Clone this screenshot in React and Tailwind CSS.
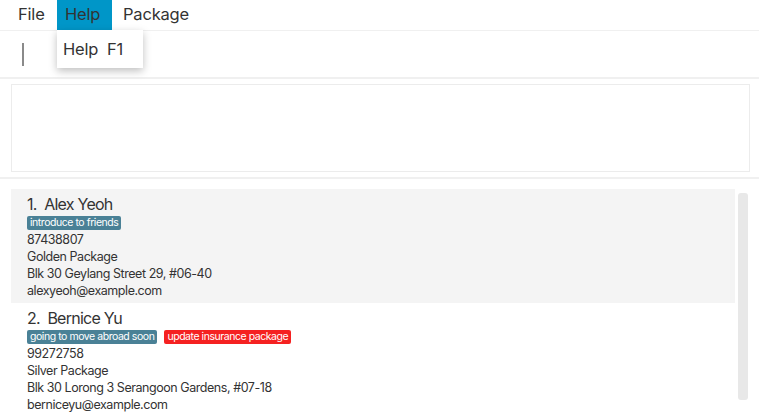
import React from 'react';

const persons = [
  {
    name: 'Alex Yeoh',
    tags: [{ label: 'introduce to friends', red: false }],
    phone: '87438807',
    pkg: 'Golden Package',
    address: 'Blk 30 Geylang Street 29, #06-40',
    email: 'alexyeoh@example.com',
  },
  {
    name: 'Bernice Yu',
    tags: [
      { label: 'going to move abroad soon', red: false },
      { label: 'update insurance package', red: true },
    ],
    phone: '99272758',
    pkg: 'Silver Package',
    address: 'Blk 30 Lorong 3 Serangoon Gardens, #07-18',
    email: 'berniceyu@example.com',
  },
];

const PersonCard = ({ person, index }) => {
  return (
    <div className={`h-[114px] pl-[16px] pt-[5px] ${index === 0 ? 'bg-[#f4f4f4]' : 'bg-white'}`}>
      <div className="text-[16px] leading-[21px] text-[#333] tracking-[-0.75px]">
        {index + 1}.&nbsp; {person.name}
      </div>
      <div className="flex gap-[7px] h-[15px] items-center">
        {person.tags.map((t) => (
          <span
            key={t.label}
            className={`text-[10.5px] leading-[14px] px-[3px] rounded-[2px] text-white tracking-[-0.45px] ${t.red ? 'bg-[#f52121]' : 'bg-[#4a8196]'}`}
          >
            {t.label}
          </span>
        ))}
      </div>
      <div className="text-[12.5px] leading-[17px] text-[#333] mt-[1px] tracking-[-0.45px]">
        <div>{person.phone}</div>
        <div>{person.pkg}</div>
        <div>{person.address}</div>
        <div>{person.email}</div>
      </div>
    </div>
  );
};

export default function App() {
  return (
    <div
      className="relative w-[759px] h-[416px] overflow-hidden bg-white text-[#333]"
      style={{ fontFamily: 'Inter, "Noto Sans", sans-serif' }}
    >
      {/* Menu bar */}
      <div className="flex h-[31px] items-stretch pl-[10px] text-[16.5px] tracking-[-0.2px] border-b border-[#f0f0f0]">
        <div className="flex items-center w-[47px] pl-[8px] pb-[2px]">File</div>
        <div className="flex items-center w-[55px] pl-[8px] pb-[2px] bg-[#0096c8]">Help</div>
        <div className="flex items-center pl-[11px] pb-[2px]">Package</div>
      </div>

      {/* Command box */}
      <div className="h-[48px] flex items-center pl-[22px] border-b-2 border-[#f0f0f0]">
        <div className="w-[1.5px] h-[23px] bg-[#8a8a8a]"></div>
      </div>

      {/* Result display */}
      <div className="pt-[5px] pb-[5px] pl-[11px] pr-[9px] border-b-2 border-[#f0f0f0]">
        <div className="h-[88px] border border-[#ececec] bg-white"></div>
      </div>

      {/* Person list */}
      <div className="flex pt-[10px] pl-[11px]">
        <div className="w-[724px]">
          {persons.map((p, i) => (
            <PersonCard key={p.name} person={p} index={i} />
          ))}
        </div>
        <div className="ml-[3px] mt-[4px] w-[10px] h-[207px] rounded-[3px] bg-[#e8e8e8]"></div>
      </div>

      {/* Help dropdown */}
      <div className="absolute left-[57px] top-[30px] w-[86px] h-[38px] bg-white shadow-[0_3px_8px_rgba(0,0,0,0.25)] flex items-center pl-[6px] text-[16.5px] tracking-[-0.2px]">
        Help&nbsp;&nbsp;F1
      </div>
    </div>
  );
}
